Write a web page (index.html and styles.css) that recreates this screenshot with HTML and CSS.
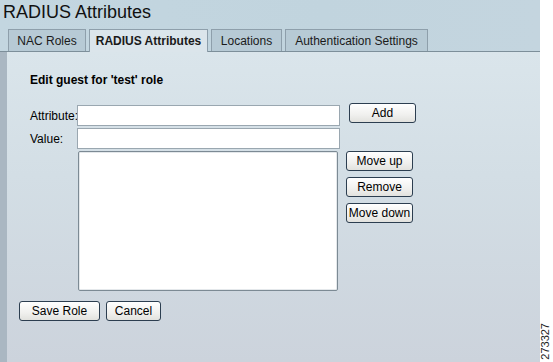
FILE: index.html
```html
<!DOCTYPE html>
<html lang="en">
<head>
  <meta charset="UTF-8">
  <title>RADIUS Attributes</title>
  <link rel="stylesheet" href="styles.css">
</head>
<body>
  <div class="page">
    <div class="main">
      <!-- Header with title and tab strip -->
      <div class="header">
        <h1 class="title">RADIUS Attributes</h1>
        <div class="tabs">
          <span class="tab tab-roles">NAC Roles</span>
          <span class="tab tab-active">RADIUS Attributes</span>
          <span class="tab tab-loc">Locations</span>
          <span class="tab tab-auth">Authentication Settings</span>
        </div>
      </div>

      <!-- Form body -->
      <div class="content">
        <div class="heading">Edit guest for 'test' role</div>
        <div class="form">
          <div class="fields">
            <div class="row">
              <label class="label">Attribute:</label>
              <input class="text" type="text">
            </div>
            <div class="row">
              <label class="label">Value:</label>
              <input class="text" type="text">
            </div>
            <div class="row">
              <span class="label"></span>
              <select class="list" size="8"></select>
            </div>
          </div>
          <div class="side">
            <button class="btn btn-add">Add</button>
            <div class="side-group">
              <button class="btn btn-side">Move up</button>
              <button class="btn btn-side">Remove</button>
              <button class="btn btn-side">Move down</button>
            </div>
          </div>
        </div>
        <div class="actions">
          <button class="btn btn-save">Save Role</button>
          <button class="btn btn-cancel">Cancel</button>
        </div>
      </div>
    </div>
    <div class="margin"><span class="fig">273327</span></div>
  </div>
</body>
</html>
```

FILE: styles.css
```css
/* Basic reset */
html, body {
  margin: 0;
  padding: 0;
  height: 100%;
  font-family: "Liberation Sans", Arial, sans-serif;
  font-size: 12px;
  color: #000;
}
.page {
  display: flex;
  height: 362px;
  background: #fff;
}
.main {
  width: 540px;
  display: flex;
  flex-direction: column;
}
/* Header strip */
.header {
  height: 51px;
  background: linear-gradient(90deg, #c3d6e0, #c1d4de 60%, #c4d5df);
  border-bottom: 1px solid #7d8f9a;
  display: flex;
  flex-direction: column;
}
.title {
  margin: 0;
  padding: 1px 0 0 3px;
  font-size: 18px;
  font-weight: normal;
  line-height: 22px;
  color: #111;
}
.tabs {
  display: flex;
  margin-top: 6px;
  padding-left: 8px;
  gap: 3px;
  height: 22px;
}
.tab {
  display: flex;
  align-items: center;
  justify-content: center;
  box-sizing: border-box;
  height: 22px;
  background: #b7cad5;
  border: 1px solid #8e9fab;
  border-bottom: none;
  font-size: 12px;
  color: #1a1a1a;
}
.tab-roles { width: 78px; }
.tab-active {
  width: 119px;
  height: 23px;
  margin-bottom: -1px;
  background: #dbe5eb;
  font-weight: bold;
  position: relative;
  z-index: 1;
}
.tab-loc { width: 71px; }
.tab-auth { width: 143px; }
/* Content area */
.content {
  flex: 1;
  background: linear-gradient(180deg, #dae5eb 0%, #d3dee5 40%, #ccd3dc 100%);
  border-left: 7px solid #aab7c2;
  padding: 21px 0 0 12px;
}
.heading {
  margin-left: 11px;
  font-weight: bold;
  font-size: 12px;
  line-height: 15px;
}
.form {
  display: flex;
  margin: 17px 0 0 11px;
}
.fields {
  display: flex;
  flex-direction: column;
  gap: 2px;
}
.row {
  display: flex;
  align-items: flex-start;
}
.label {
  width: 47px;
  padding-top: 4px;
  font-size: 12px;
}
.text {
  box-sizing: border-box;
  width: 263px;
  height: 21px;
  margin: 0;
  border: 1px solid #9aa7b0;
  background: #fff;
}
.list {
  box-sizing: border-box;
  width: 260px;
  height: 140px;
  margin: 0 0 0 1px;
  border: 1px solid #7c8a94;
  box-shadow: inset 0 0 0 1px #e4e8eb;
  background: #fff;
}
.side {
  display: flex;
  flex-direction: column;
  padding-left: 9px;
}
.btn {
  box-sizing: border-box;
  height: 20px;
  padding: 0;
  font-family: "Liberation Sans", Arial, sans-serif;
  font-size: 12px;
  color: #000;
  background: linear-gradient(180deg, #ffffff, #f0f0ee 60%, #e2e2de);
  border: 1px solid #2c3e50;
  border-radius: 3px;
}
.btn-add {
  width: 67px;
  margin-top: -2px;
}
.side-group {
  display: flex;
  flex-direction: column;
  gap: 6px;
  margin: 28px 0 0 -3px;
}
.btn-side { width: 67px; }
.actions {
  display: flex;
  gap: 6px;
  margin-top: 10px;
}
.btn-save { width: 81px; }
.btn-cancel { width: 55px; }
/* White figure margin on the right */
.margin {
  flex: 1;
  position: relative;
}
.fig {
  position: absolute;
  left: -1px;
  bottom: 2px;
  writing-mode: vertical-rl;
  transform: rotate(180deg);
  font-size: 11px;
  color: #222;
}
```
